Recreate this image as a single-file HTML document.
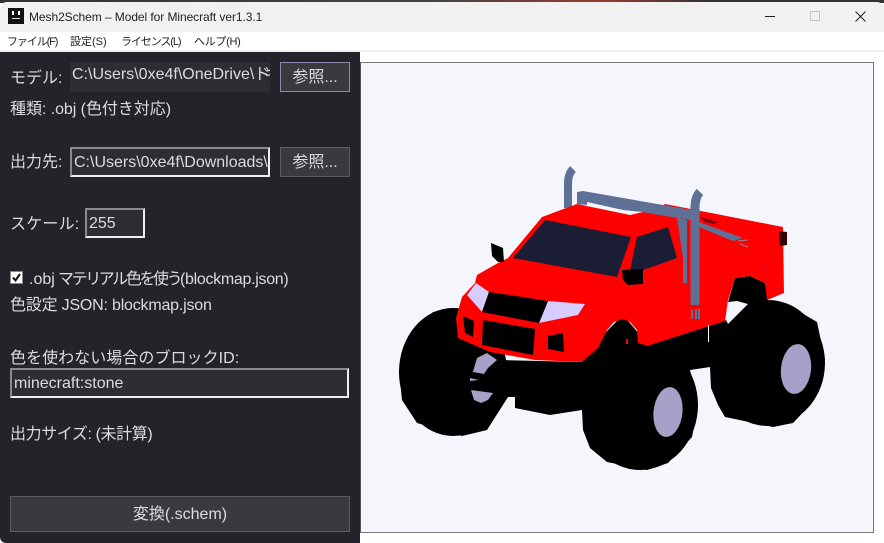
<!DOCTYPE html>
<html lang="ja"><head><meta charset="utf-8"><title>Mesh2Schem</title>
<style>
html,body{margin:0;padding:0;background:#fff}
#r{position:relative;width:884px;height:543px;overflow:hidden;background:#fff;font-family:"Liberation Sans","Noto Sans CJK JP",sans-serif}
#r div{position:absolute;box-sizing:border-box;white-space:nowrap}
.t{color:#dcdcdc;font-size:16px;line-height:22px}
.m{color:#222;font-size:11px;line-height:16px;top:34px}
.i{background:#2e2d33;color:#dcdcdc;font-size:16px;line-height:24px;overflow:hidden;border:2px solid;border-color:#8a8a8a #eee #eee #8a8a8a}
.b{background:#3a393f;border:1px solid #5c5c60;color:#dcdcdc;font-size:16px;text-align:center}
</style></head><body><div id="r">
<div style="left:0;top:0;width:884px;height:3px;background:linear-gradient(90deg,#333 0,#444 50%,#9a3a30 68%,#333 80%,#333 100%)"></div>
<div style="left:0;top:2px;width:884px;height:30px;background:#f1f1f1;border-radius:7px 7px 0 0"></div>
<div style="left:8px;top:8px;width:16px;height:16px;background:#111"></div>
<div style="left:12px;top:11px;width:2px;height:4px;background:#fff"></div>
<div style="left:18px;top:11px;width:2px;height:4px;background:#fff"></div>
<div style="left:12px;top:18px;width:8px;height:1px;background:#ddd"></div>
<div style="left:29px;top:9px;font-size:12px;letter-spacing:-.07px;line-height:16px;color:#222">Mesh2Schem – Model for Minecraft ver1.3.1</div>
<div style="left:765px;top:16px;width:10px;height:1px;background:#222"></div>
<div style="left:810px;top:11px;width:10px;height:10px;border:1px solid #c4c4c4"></div>
<svg style="position:absolute;left:855px;top:11px" width="11" height="11"><path d="M.5.5l10 10M10.5.5l-10 10" stroke="#222" fill="none"/></svg>
<div class="m" style="left:7px;letter-spacing:-1.1px">ファイル(F)</div>
<div class="m" style="left:70px">設定(S)</div>
<div class="m" style="left:121px;letter-spacing:-1.1px">ライセンス(L)</div>
<div class="m" style="left:194px;letter-spacing:-.3px">ヘルプ(H)</div>
<div style="left:0;top:50px;width:884px;height:2px;background:#f0f0f0"></div>

<div style="left:0;top:52px;width:360px;height:491px;background:#242329;border-bottom-left-radius:6px"></div>
<div class="t" style="left:10px;top:68px">モデル:</div>
<div class="i" style="left:70px;top:62px;width:200px;height:30px;border:0;background:#2e2d33;padding:1px 2px">C:\Users\0xe4f\OneDrive\<span style="letter-spacing:-6px">ドキ</span></div>
<div class="b" style="left:280px;top:62px;width:70px;height:30px;line-height:30px;border-color:#8b89b0">参照...</div>
<div class="t" style="left:10px;top:99px;letter-spacing:-.05px">種類: .obj (色付き対応)</div>
<div class="t" style="left:10px;top:152px">出力先:</div>
<div class="i" style="left:70px;top:147px;width:200px;height:30px;padding:2px 2px">C:\Users\0xe4f\Downloads\output</div>
<div class="b" style="left:280px;top:147px;width:70px;height:30px;line-height:30px">参照...</div>
<div class="t" style="left:10px;top:214px;letter-spacing:.2px">スケール:</div>
<div class="i" style="left:85px;top:208px;width:60px;height:30px;padding:2px 2px">255</div>
<div style="left:10px;top:271px;width:13px;height:13px;background:#fff;border:1px solid #888"></div>
<svg style="position:absolute;left:10px;top:271px" width="13" height="13"><path d="M3 6.5l2.5 3L10 3" stroke="#111" stroke-width="2" fill="none"/></svg>
<div class="t" style="left:29px;top:269px">.obj</div>
<div class="t" style="left:58px;top:269px;letter-spacing:-2.4px">マテリアル色を使う</div>
<div class="t" style="left:180px;top:269px;letter-spacing:-.3px">(blockmap.json)</div>
<div class="t" style="left:10px;top:295px;letter-spacing:-.2px">色設定 JSON: blockmap.json</div>
<div class="t" style="left:10px;top:348px;letter-spacing:.05px">色を使わない場合のブロックID:</div>
<div class="i" style="left:10px;top:368px;width:339px;height:30px;padding:2px 2px">minecraft:stone</div>
<div class="t" style="left:10px;top:424px;letter-spacing:-.4px">出力サイズ: (未計算)</div>
<div class="b" style="left:10px;top:496px;width:340px;height:36px;line-height:36px">変換(.schem)</div>

<div style="left:360px;top:62px;width:514px;height:471px;background:#f5f6fc;border:1px solid #777;border-left-color:#555"></div>
<svg style="position:absolute;left:0;top:0" width="884" height="543">
<!-- tyres and chassis -->
<ellipse cx="453" cy="372" rx="54" ry="64" fill="#000"/>
<ellipse cx="640" cy="405" rx="58" ry="65" fill="#000"/>
<ellipse cx="768" cy="363" rx="57" ry="63" fill="#000"/>
<path fill="#000" d="M433 312L455 308 462 320 500 360 582 362 598 340 623 315 640 335 647 346 726 320 740 305 767 300 800 312 817 322 825 360 820 383 810 405 793 423 773 427 725 417 718 405 711 388 710 367 690 370 698 405 692 437 668 463 647 470 607 462 590 448 583 430 582 410 550 415 515 408 515 397 508 397 487 430 462 436 417 423 402 400 399 370 405 345Z"/>
<path fill="#f5f6fc" d="M726 320L737 301 748 304 728 324Z"/>
<path fill="#000" d="M728 302L735 278 750 276 765 283 768 300 748 304 737 301Z"/>
<!-- pipes behind body -->
<path fill="none" stroke="#5f7096" stroke-width="8" d="M568 208V184Q568 174 573 169"/>
<!-- body -->
<path fill="#f00" d="M542 217L577 204 630 215 660 208 665 204 783 227 784 293 767 300 765 283 750 276 735 278 728 300 725 321 647 346 638 343 637 330 630 322 623 319 614 322 607 330 601 342 598 348 582 362 535 360 490 352 458 338 456 318 462 297 475 283 477 275 498 263 508 258Z"/>
<path fill="#f5f6fc" d="M590 204L622 211 632 215 600 208Z"/>
<path fill="#1a1d33" d="M545 220L631 237 617 277 513 258Z"/>
<path fill="#1a1d33" d="M637 237L668 227 677 258 643 270 630 270Z"/>
<path fill="#000" d="M622 270L643 269 643 284 628 285 623 280Z"/>
<path fill="#000" d="M491 243L503 248 504 262 498 262 492 256Z"/>
<path fill="#d6ccff" d="M476 283L489 292 482 312 467 295Z"/>
<path fill="#d6ccff" d="M548 301L585 304 578 315 539 323Z"/>
<path fill="#000" d="M489 292L548 301 539 323 482 312Z"/>
<path fill="#000" d="M483 320L535 329 533 355 482 345Z"/>
<path fill="#000" d="M463 316L474 321 473 337 465 333Z"/>
<path fill="#000" d="M548 336L563 333 564 352 548 349Z"/>
<path fill="#300" d="M779 231L787 232 787 245 780 246Z"/>
<path fill="#7a0010" d="M700 217L718 222 714 224 705 222Z"/>
<!-- pipes in front -->
<path fill="#5f7096" d="M577 192L583 191 692 210 691 220 677 218 642 212 623 210 587 202 587 205 577 204Z"/>
<path fill="none" stroke="#5f7096" stroke-width="9" d="M695 305V208Q695 197 700 192"/>
<path fill="#5f7096" d="M699 222L743 238 733 241 699 227Z"/>
<path fill="#5f7096" d="M677 218L687 220 687 283 683 283 683 258Z"/>
<path fill="#5f7096" d="M691 309h2v10h-2zM695 309h2v10h-2zM698 309h2v10h-2z"/>
<path fill="none" stroke="#a08" stroke-opacity=".5" stroke-width="1" d="M761 265L765 270 769 265"/>
<path fill="none" stroke="#8a8aa0" stroke-width="1" d="M738 241L748 240M740 244L748 247"/>
<!-- hubs -->
<ellipse cx="668" cy="412" rx="14.5" ry="25" fill="#a8a0c8" transform="rotate(6 668 412)"/>
<ellipse cx="796" cy="369" rx="15" ry="25" fill="#a8a0c8" transform="rotate(6 796 369)"/>
<path fill="#a8a0c8" d="M472 375L477 358 487 353 497 360 488 368 484 374 473 372Z"/>
<path fill="#a8a0c8" d="M471 390L493 393 488 400 481 403 474 400Z"/>
<path fill="#a8a0c8" d="M470 378L479 380 470 381Z"/>
<path fill="#f00" d="M626 339h2v5h-2z"/>
<path fill="#fff" d="M708 325h1v17h-1z"/>
</svg>
</div></body></html>
